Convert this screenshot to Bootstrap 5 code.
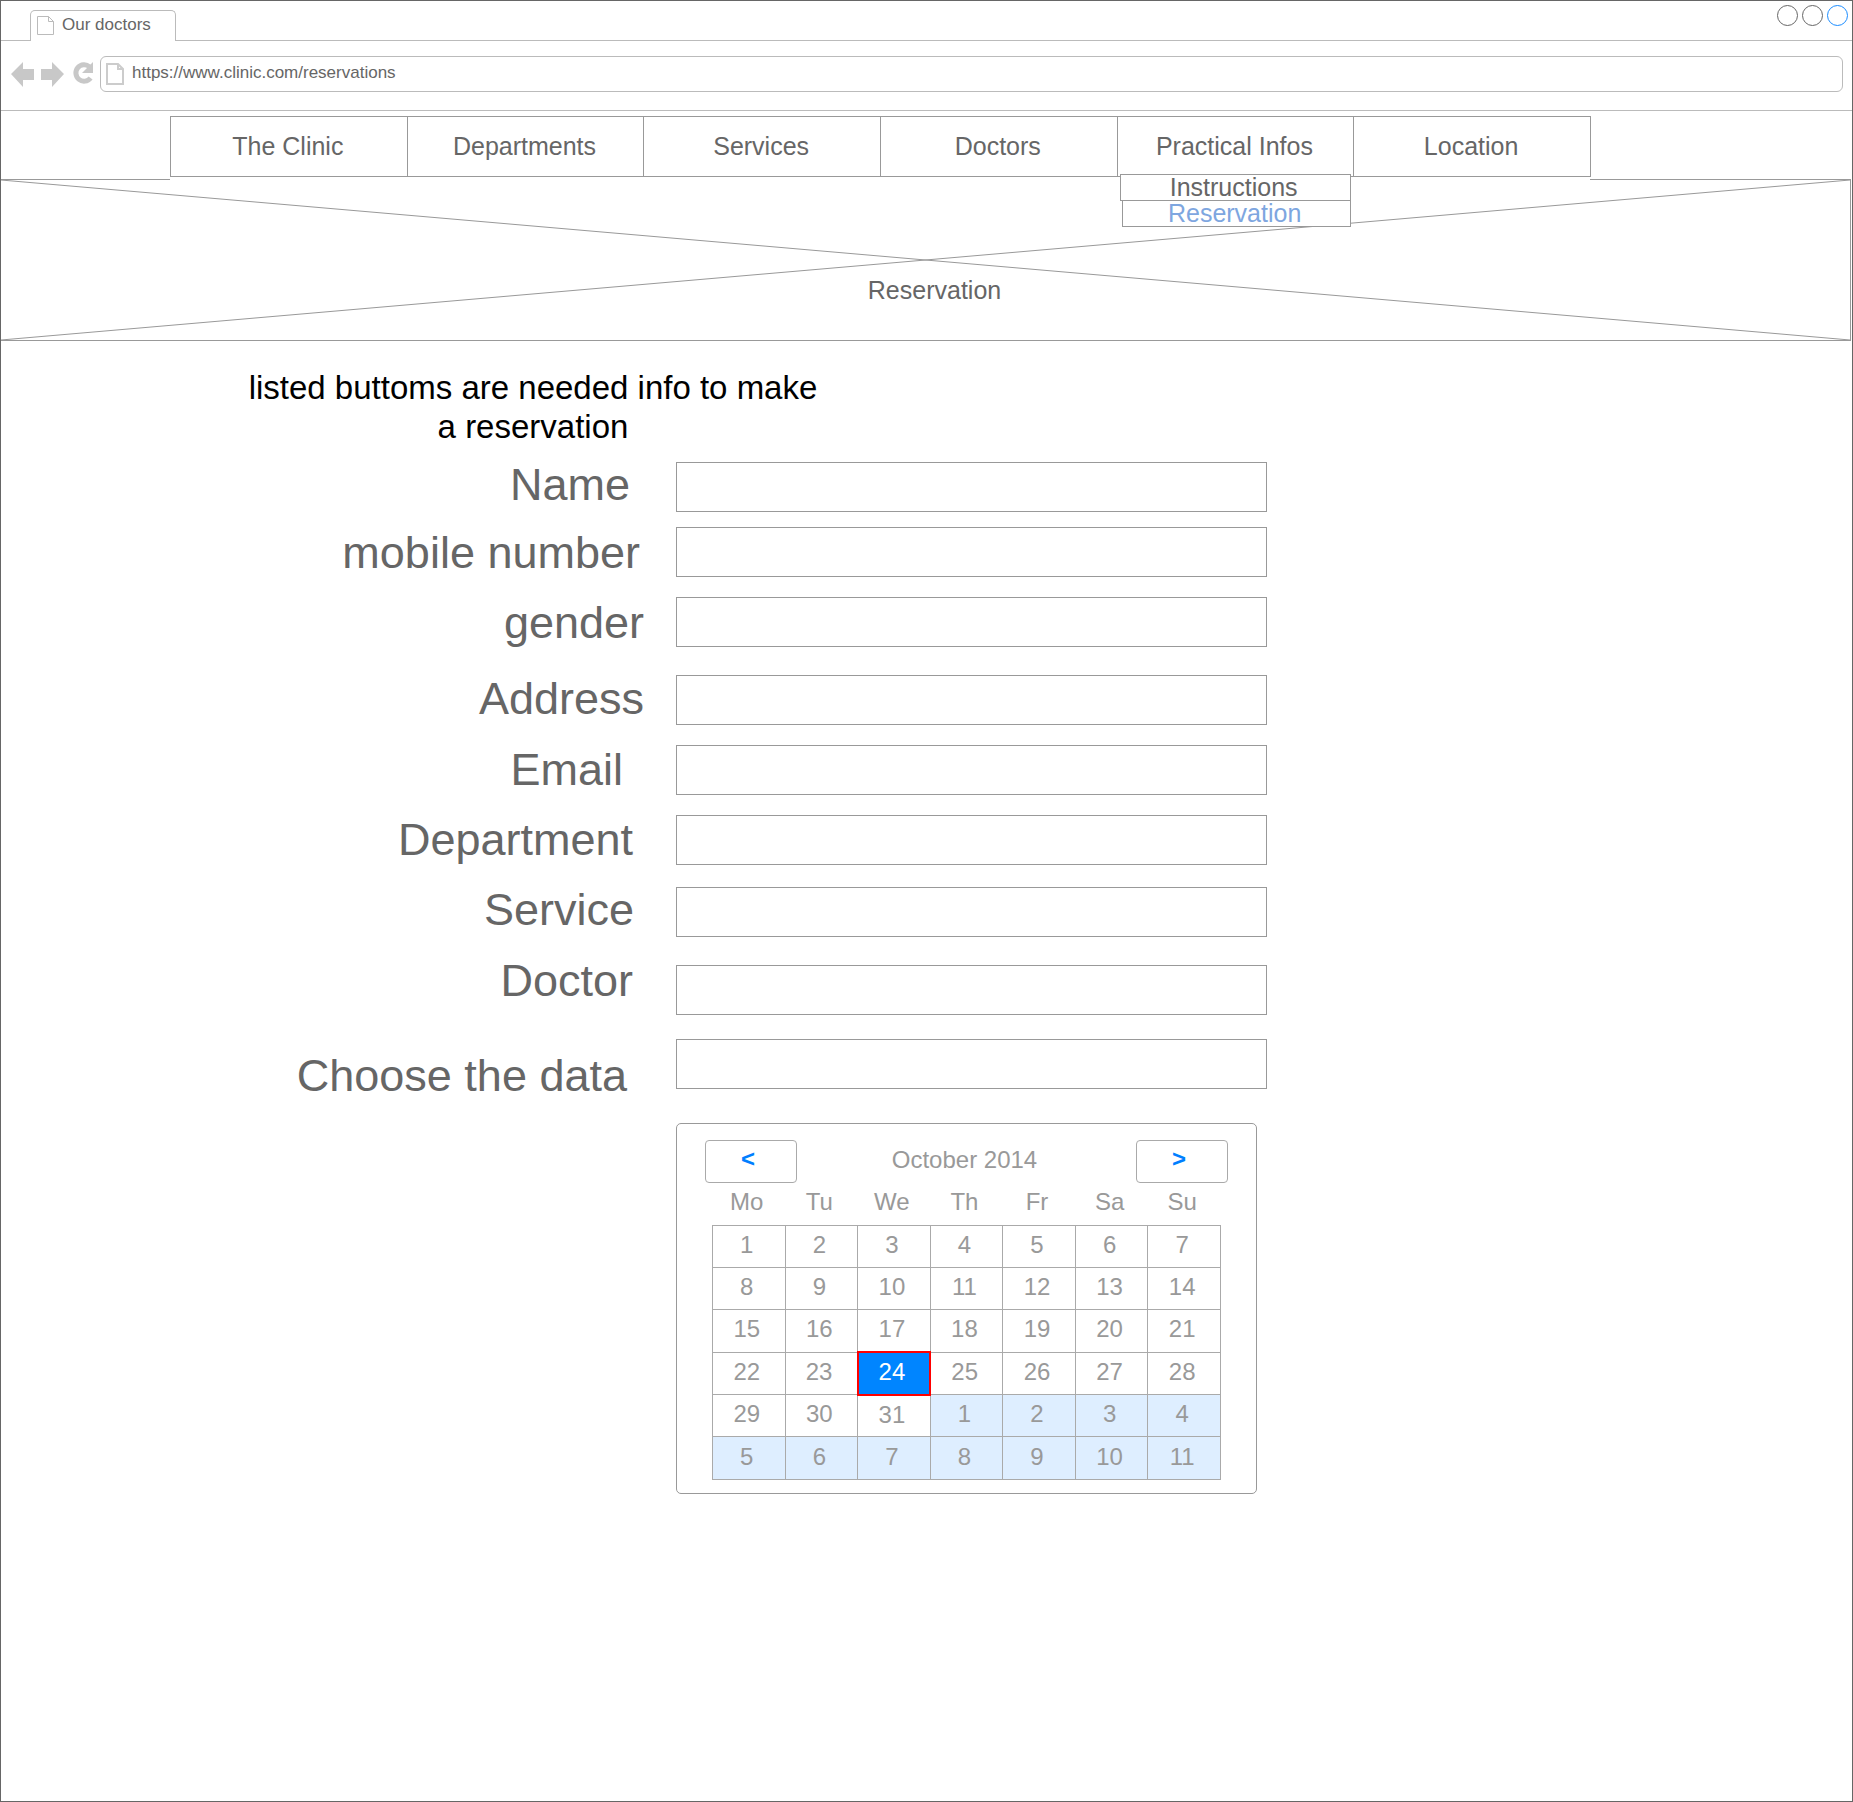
<!DOCTYPE html>
<html lang="en">
<head>
<meta charset="UTF-8">
<title>Our doctors</title>
<link href="https://cdn.jsdelivr.net/npm/bootstrap@5.3.3/dist/css/bootstrap.min.css" rel="stylesheet">
<style>
body { margin: 0; background: #fff; font-family: "Liberation Sans", Arial, sans-serif; color: #666; }
.frame { height: 1802px; border: 1px solid #666; }

/* browser chrome */
.tab-bar { height: 40px; border-bottom: 1px solid #bbb; padding-left: 29px; }
.win-tab { width: 146px; height: 31px; margin-top: 9px; padding: 0 0 2px 6px; border: 1px solid #bbb; border-bottom: 0; border-radius: 5px 5px 0 0; background: #fff; font-size: 17px; gap: 8px; }
.win-dot { width: 21px; height: 21px; border: 1.5px solid #666; border-radius: 50%; }
.win-dot-on { border-color: #1a8cff; }
.win-dots { padding: 4px 4px 0 0; gap: 4px; }
.addr-bar { height: 70px; padding: 0 9px 4px 10px; border-bottom: 1px solid #bbb; }
.url-box { height: 36px; margin-left: 1px; padding-left: 5px; border: 1px solid #bbb; border-radius: 6px; font-size: 17px; gap: 8px; }
.url-text { padding-bottom: 2px; }

/* main menu */
.main-menu { height: 65px; margin: 5px 0 -2px; padding-left: 169px; position: relative; z-index: 2; }
.menu-strip { height: 65px; background: #fff; }
.menu-item { width: 237.67px; height: 61px; margin-right: -1px; padding-right: 2px; border: 1px solid #999; font-size: 25px; line-height: 59px; text-align: center; position: relative; }
.sub-menu { position: absolute; left: 2px; top: 57px; width: 231px; background: #fff; line-height: 25px; }
.sub-item { height: 27px; padding-right: 3px; border: 1px solid #999; }
.sub-item + .sub-item { margin-top: -1px; margin-left: 2px; color: #7ea6e0; }

/* banner */
.banner { height: 162px; margin-right: 1px; padding: 92px 0 0 18px; border: 1px solid #999; border-left: 0; position: relative; font-size: 25px; }
.banner-x { position: absolute; left: 0; top: 0; width: 100%; height: 100%; }

.intro { width: 590px; margin: 27px 0 0 237px; color: #000; font-size: 33px; line-height: 39px; }

/* form */
.form-list { margin-top: 16px; }
.form-line label { width: 675px; height: 50px; font-size: 45px; line-height: 50px; text-align: right; }
.form-line input { width: 591px; height: 50px; border: 1px solid #999; border-radius: 0; }
.f-name label { padding-right: 46px; line-height: 46px; }
.f-mobile { margin-top: 15px; } .f-mobile label { padding-right: 36px; line-height: 52px; }
.f-gender { margin-top: 20px; } .f-gender label { padding-right: 32px; line-height: 52px; }
.f-address { margin-top: 28px; } .f-address label { padding-right: 32px; line-height: 48px; }
.f-email { margin-top: 20px; } .f-email label { padding-right: 53px; line-height: 50px; }
.f-dept { margin-top: 20px; } .f-dept label { padding-right: 43px; line-height: 50px; }
.f-service { margin-top: 22px; } .f-service label { padding-right: 42px; line-height: 46px; }
.f-doctor { margin-top: 28px; } .f-doctor label { padding-right: 43px; line-height: 32px; }
.f-data { margin-top: 24px; } .f-data label { padding-right: 49px; line-height: 74px; }

/* calendar */
.cal-box { width: 581px; height: 371px; margin: 34px 0 0 675px; padding: 16px 28px 0; border: 1px solid #999; border-radius: 5px; font-size: 24px; color: #999; }
.cal-btn { width: 92px; height: 43px; padding: 0 6px 6px 0; border: 1px solid #aaa; border-radius: 4px; font-size: 24px; font-weight: 700; line-height: 1; color: #007fff; }
.cal-title { padding-top: 2px; padding-right: 4px; }
.cal-table { width: 509px; margin: 0 7px; table-layout: fixed; border-color: #aaa; color: #999; }
.cal-table th { height: 42px; padding: 0 4px 4px 0; border: 0; font-weight: 400; text-align: center; vertical-align: middle; color: #999; }
.cal-table td { height: 42.4px; padding: 0 4px 3px 0; text-align: center; vertical-align: middle; color: #999; }
.cal-table thead tr { border: 0; }
.cal-table td.cal-next { background: #deeeff; }
.cal-table td.cal-today { background: #0085ff; border: 2px solid #f00; color: #fff; }
</style>
</head>
<body>
<div class="frame">
  <div class="tab-bar d-flex justify-content-between">
    <div class="win-tab d-flex align-items-center">
      <svg width="17" height="20" viewBox="0 0 17 20"><path d="M.5 1.5h11l5 5v13H.5zM11.5 1.5v5h5" fill="#fff" stroke="#bbb"/></svg>
      <span>Our doctors</span>
    </div>
    <div class="win-dots d-flex">
      <div class="win-dot"></div>
      <div class="win-dot"></div>
      <div class="win-dot win-dot-on"></div>
    </div>
  </div>
  <div class="addr-bar d-flex align-items-center">
    <svg width="88" height="26" viewBox="0 0 88 26" class="flex-shrink-0">
      <path d="M0 13 12 1v7h11v11H12v7z" fill="#c8c8c8"/>
      <path d="M53 13 41 1v7H30v11h11v7z" fill="#c8c8c8"/>
      <path d="M78.5 5.8A8.2 8.2 0 1 0 79.6 17" fill="none" stroke="#c8c8c8" stroke-width="5"/>
      <path d="M82 1v11H71z" fill="#c8c8c8"/>
    </svg>
    <div class="url-box flex-grow-1 d-flex align-items-center">
      <svg width="18" height="22" viewBox="0 0 18 22" class="flex-shrink-0"><path d="M1 1h11l5 5v15H1zM12 1v5h5" fill="#fff" stroke="#ccc" stroke-width="2"/></svg>
      <span class="url-text">https://www.clinic.com/reservations</span>
    </div>
  </div>

  <nav class="main-menu">
    <div class="menu-strip d-inline-flex align-items-start">
      <div class="menu-item">The Clinic</div>
      <div class="menu-item">Departments</div>
      <div class="menu-item">Services</div>
      <div class="menu-item">Doctors</div>
      <div class="menu-item">Practical Infos
        <div class="sub-menu">
          <div class="sub-item">Instructions</div>
          <div class="sub-item">Reservation</div>
        </div>
      </div>
      <div class="menu-item">Location</div>
    </div>
  </nav>

  <div class="banner d-flex justify-content-center">
    <svg class="banner-x" preserveAspectRatio="none" viewBox="0 0 100 100"><line x1="0" y1="0" x2="100" y2="100" stroke="#999" vector-effect="non-scaling-stroke"/><line x1="100" y1="0" x2="0" y2="100" stroke="#999" vector-effect="non-scaling-stroke"/></svg>
    <span class="position-relative">Reservation</span>
  </div>

  <div class="intro text-center">listed buttoms are needed info to make a reservation</div>

  <form class="form-list">
    <div class="form-line f-name d-flex"><label>Name</label><input class="form-control" type="text"></div>
    <div class="form-line f-mobile d-flex"><label>mobile number</label><input class="form-control" type="text"></div>
    <div class="form-line f-gender d-flex"><label>gender</label><input class="form-control" type="text"></div>
    <div class="form-line f-address d-flex"><label>Address</label><input class="form-control" type="text"></div>
    <div class="form-line f-email d-flex"><label>Email</label><input class="form-control" type="text"></div>
    <div class="form-line f-dept d-flex"><label>Department</label><input class="form-control" type="text"></div>
    <div class="form-line f-service d-flex"><label>Service</label><input class="form-control" type="text"></div>
    <div class="form-line f-doctor d-flex"><label>Doctor</label><input class="form-control" type="text"></div>
    <div class="form-line f-data d-flex"><label>Choose the data</label><input class="form-control" type="text"></div>
  </form>

  <div class="cal-box">
    <div class="d-flex justify-content-between align-items-start">
      <button type="button" class="btn cal-btn">&lt;</button>
      <div class="cal-title">October 2014</div>
      <button type="button" class="btn cal-btn">&gt;</button>
    </div>
    <table class="table table-bordered cal-table">
      <thead>
        <tr><th>Mo</th><th>Tu</th><th>We</th><th>Th</th><th>Fr</th><th>Sa</th><th>Su</th></tr>
      </thead>
      <tbody>
        <tr><td>1</td><td>2</td><td>3</td><td>4</td><td>5</td><td>6</td><td>7</td></tr>
        <tr><td>8</td><td>9</td><td>10</td><td>11</td><td>12</td><td>13</td><td>14</td></tr>
        <tr><td>15</td><td>16</td><td>17</td><td>18</td><td>19</td><td>20</td><td>21</td></tr>
        <tr><td>22</td><td>23</td><td class="cal-today">24</td><td>25</td><td>26</td><td>27</td><td>28</td></tr>
        <tr><td>29</td><td>30</td><td>31</td><td class="cal-next">1</td><td class="cal-next">2</td><td class="cal-next">3</td><td class="cal-next">4</td></tr>
        <tr><td class="cal-next">5</td><td class="cal-next">6</td><td class="cal-next">7</td><td class="cal-next">8</td><td class="cal-next">9</td><td class="cal-next">10</td><td class="cal-next">11</td></tr>
      </tbody>
    </table>
  </div>
</div>
</body>
</html>
